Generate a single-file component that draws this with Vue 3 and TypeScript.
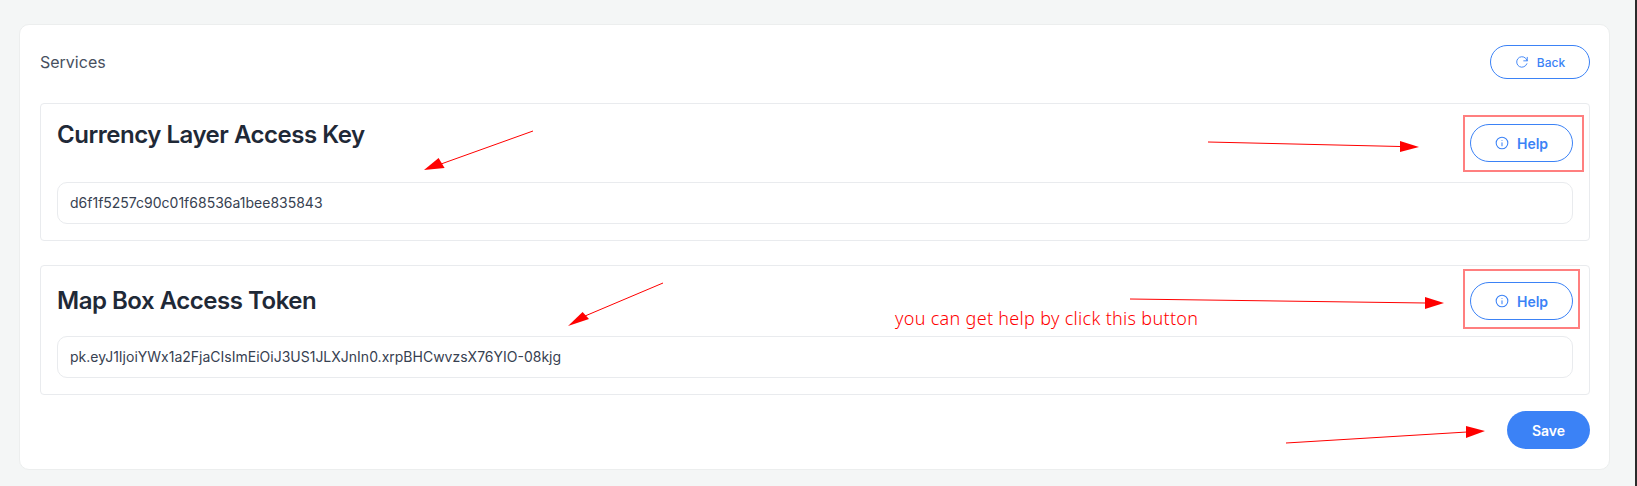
<script setup lang="ts">
interface Service {
  title: string;
  value: string;
  variant: string;
}

const services: Service[] = [
  { title: "Currency Layer Access Key", value: "d6f1f5257c90c01f68536a1bee835843", variant: "panel-top" },
  { title: "Map Box Access Token", value: "pk.eyJ1IjoiYWx1a2FjaCIsImEiOiJ3US1JLXJnIn0.xrpBHCwvzsX76YIO-08kjg", variant: "panel-center" },
];
</script>

<template>
  <div class="screen">
    <main class="page">
      <section class="card">
        <header class="card-head">
          <h2 class="card-title">Services</h2>
          <button class="btn btn-outline btn-back" type="button">
            <svg class="icon" viewBox="0 0 24 24" fill="none" stroke="currentColor" stroke-width="1.6" stroke-linecap="round" stroke-linejoin="round">
              <path d="M21 4v6h-6" />
              <path d="M20.4 15a9 9 0 1 1-2.1-9.4L21 10" />
            </svg>
            Back
          </button>
        </header>

        <div class="panels">
          <article v-for="s in services" :key="s.title" class="panel" :class="s.variant">
            <div class="panel-row">
              <h3 class="panel-title">{{ s.title }}</h3>
              <button class="btn btn-outline btn-help" type="button">
                <svg class="icon" viewBox="0 0 24 24" fill="none" stroke="currentColor" stroke-width="1.8" stroke-linecap="round">
                  <circle cx="12" cy="12" r="10" />
                  <path d="M12 11.5v5" />
                  <path d="M12 7.6v.2" />
                </svg>
                Help
              </button>
            </div>
            <input class="field" type="text" readonly :value="s.value" />
          </article>
        </div>

        <footer class="card-foot">
          <button class="btn btn-solid" type="button">Save</button>
        </footer>
      </section>
    </main>
    <div class="edge"></div>

    <svg class="marks" width="1637" height="486" viewBox="0 0 1637 486" fill="none">
      <g stroke="#ff0000" stroke-width="1">
        <path d="M533 131 L441 164" />
        <path d="M1208 142 L1400 146.500" />
        <path d="M663 283 L585 316" />
        <path d="M1130 299 L1426 303" />
        <path d="M1286 443 L1467 432" />
      </g>
      <g fill="#ff0000">
        <path d="M424 170 L438.600 158 L444.600 168 Z" />
        <path d="M1419 147 L1400 141 L1400 152 Z" />
        <path d="M568 326 L582.600 312 L589 319 Z" />
        <path d="M1444 303 L1425 297 L1425 309 Z" />
        <path d="M1485 431 L1466 426 L1466 438 Z" />
      </g>
      <g stroke="#ff7f7f" stroke-width="2">
        <rect x="1464" y="116" width="119" height="55" />
        <rect x="1464" y="270" width="115" height="58" />
      </g>
    </svg>
    <div class="note">you can get help by click this button</div>
  </div>
</template>

<style>
html,
body {
  margin: 0;
  height: 486px;
  overflow: hidden;
  background: #f4f6f6;
}
</style>

<style scoped>
.screen {
  position: relative;
  display: flex;
  width: 1637px;
  height: 486px;
  font-family: Inter, "Liberation Sans", sans-serif;
}

.page {
  flex: 1;
  min-width: 0;
  padding: 24px 25px 16px 19px;
  box-sizing: border-box;
  background: #f4f6f6;
}

.edge {
  width: 2px;
  background: #2b2b2b;
}

.card {
  box-sizing: border-box;
  height: 446px;
  padding: 20px 19px 19px 20px;
  background: #ffffff;
  border: 1px solid #eceeee;
  border-radius: 10px;
}

.card-head {
  display: flex;
  align-items: center;
  justify-content: space-between;
  margin-bottom: 24px;
}

.card-title {
  margin: 0;
  font-size: 16px;
  font-weight: 400;
  line-height: 34px;
  color: #475060;
}

.panels {
  display: flex;
  flex-direction: column;
  gap: 24px;
}

.panel {
  padding: 16px;
  border: 1px solid #e9ebee;
  border-radius: 4px;
}

.panel-row {
  display: flex;
  justify-content: space-between;
}

.panel-top .panel-row {
  align-items: flex-start;
  margin-bottom: 20px;
}

.panel-top .panel-title {
  margin-top: -1px;
}

.panel-top .btn-help {
  margin-top: 4px;
}

.panel-center .panel-row {
  align-items: center;
  margin-bottom: 16px;
}

.panel-title {
  margin: 0;
  font-size: 24px;
  line-height: 32px;
  font-weight: 600;
  letter-spacing: -0.48px;
  color: #1f2937;
}

.field {
  display: block;
  box-sizing: border-box;
  width: 100%;
  height: 42px;
  padding: 0 12px 2px;
  border: 1px solid #e9ebee;
  border-radius: 10px;
  outline: none;
  background: #ffffff;
  font-family: inherit;
  font-size: 14px;
  color: #374151;
}

.btn {
  display: inline-flex;
  align-items: center;
  justify-content: center;
  box-sizing: border-box;
  border-radius: 999px;
  font-family: inherit;
  cursor: pointer;
}

.btn-outline {
  border: 1px solid #3b82f6;
  background: #ffffff;
  color: #3b82f6;
}

.btn-back {
  width: 100px;
  height: 34px;
  gap: 8px;
  font-size: 12px;
  font-weight: 500;
}

.btn-help {
  width: 103px;
  height: 38px;
  gap: 8px;
  font-size: 14px;
  font-weight: 600;
}

.icon {
  width: 14px;
  height: 14px;
  flex: none;
}

.card-foot {
  display: flex;
  justify-content: flex-end;
  margin-top: 16px;
}

.btn-solid {
  width: 83px;
  height: 38px;
  border: none;
  background: #3b82f6;
  color: #ffffff;
  font-size: 14px;
  font-weight: 600;
}

.marks {
  position: absolute;
  left: 0;
  top: 0;
  pointer-events: none;
}

.note {
  position: absolute;
  left: 895px;
  top: 306px;
  font-family: "Noto Sans", sans-serif;
  font-size: 18px;
  font-weight: 300;
  letter-spacing: 0.31px;
  line-height: 24px;
  color: #ff0000;
  white-space: nowrap;
}
</style>
